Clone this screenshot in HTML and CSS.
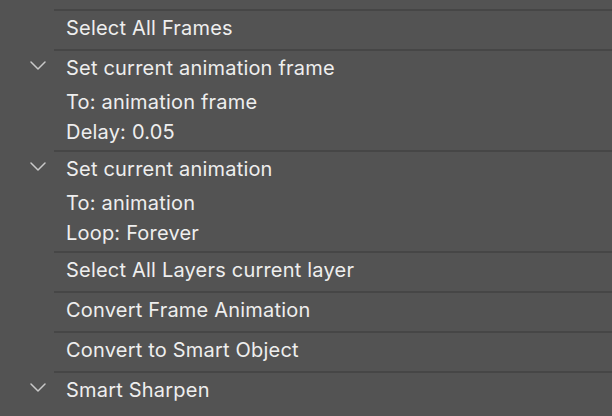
FILE: index.html
```html
<!DOCTYPE html>
<html>
<head>
<meta charset="utf-8">
<link rel="stylesheet" href="styles.css">
</head>
<body>
<div class="list">
  <div class="top-cut"></div>
  <div class="item">
    <div class="gutter"></div>
    <div class="body"><div class="line">Select All Frames</div></div>
  </div>
  <div class="item">
    <div class="gutter"><svg class="chev" width="16" height="9" viewBox="0 0 16 9"><polyline points="1,1 8,8 15,1"/></svg></div>
    <div class="body">
      <div class="line">Set current animation frame</div>
      <div class="subs">
        <div class="line">To: animation frame</div>
        <div class="line">Delay: 0.05</div>
      </div>
    </div>
  </div>
  <div class="item">
    <div class="gutter"><svg class="chev" width="16" height="9" viewBox="0 0 16 9"><polyline points="1,1 8,8 15,1"/></svg></div>
    <div class="body">
      <div class="line">Set current animation</div>
      <div class="subs">
        <div class="line">To: animation</div>
        <div class="line">Loop: Forever</div>
      </div>
    </div>
  </div>
  <div class="item">
    <div class="gutter"></div>
    <div class="body"><div class="line">Select All Layers current layer</div></div>
  </div>
  <div class="item">
    <div class="gutter"></div>
    <div class="body"><div class="line">Convert Frame Animation</div></div>
  </div>
  <div class="item">
    <div class="gutter"></div>
    <div class="body"><div class="line">Convert to Smart Object</div></div>
  </div>
  <div class="item">
    <div class="gutter"><svg class="chev" width="16" height="9" viewBox="0 0 16 9"><polyline points="1,1 8,8 15,1"/></svg></div>
    <div class="body"><div class="line">Smart Sharpen</div></div>
  </div>
</div>
</body>
</html>
```
FILE: styles.css
```css
html, body {
  margin: 0;
  padding: 0;
  background: #535353;
  width: 612px;
  height: 416px;
  overflow: hidden;
}
.list {
  display: flex;
  flex-direction: column;
  font-family: Inter, "Noto Sans", sans-serif;
  font-size: 20px;
  letter-spacing: 0.2px;
  color: #eeeeee;
}
.top-cut {
  height: 9px;
}
.item {
  display: flex;
}
.gutter {
  width: 24px;
  padding-left: 30px;
  padding-top: 12px;
  flex: none;
}
.chev {
  display: block;
  fill: none;
  stroke: #c9c9c9;
  stroke-width: 1.5;
  stroke-linecap: round;
  stroke-linejoin: round;
}
.body {
  flex: 1;
  border-top: 2px solid #464646;
  padding: 2px 0 6px 12px;
}
.line {
  line-height: 30px;
  white-space: nowrap;
}
.subs {
  padding-top: 4px;
  margin-bottom: -3px;
}
```
